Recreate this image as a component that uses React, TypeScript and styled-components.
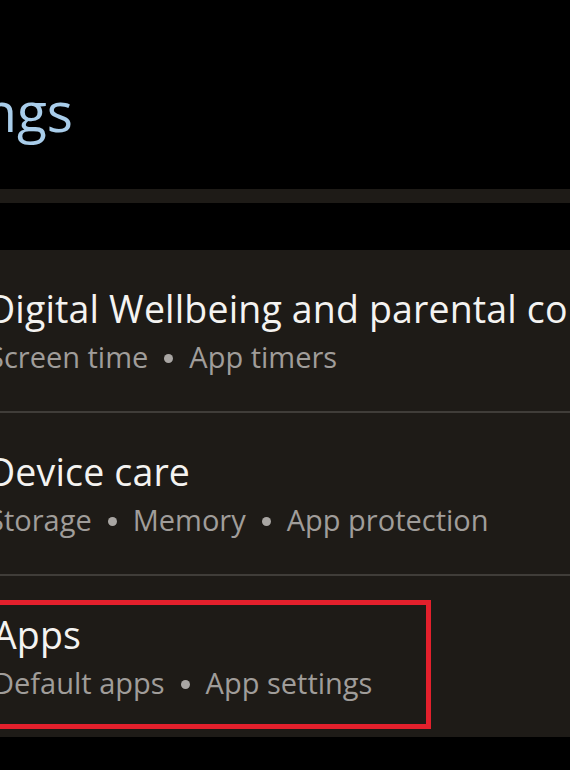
import React from "react";
import styled, { createGlobalStyle } from "styled-components";

const Global = createGlobalStyle`
  html, body { margin: 0; padding: 0; background: #000; }
  body { overflow: hidden; font-family: "Open Sans", "Noto Sans", sans-serif; }
`;

const Page = styled.div`
  width: 570px;
  height: 770px;
  overflow: hidden;
  background: #000;
  display: flex;
  flex-direction: column;
`;

const Header = styled.header`
  height: 189px;
  display: flex;
  align-items: flex-start;
  justify-content: flex-end;
  width: 300px;
  margin-left: -227px;
  box-sizing: border-box;
  padding-top: 79px;
  flex: none;
`;

const Title = styled.h1`
  margin: 0;
  font-size: 55px;
  line-height: 64px;
  font-weight: 400;
  color: #a9cdea;
  white-space: nowrap;
`;

const Strip = styled.div`
  height: 14px;
  background: #1e1b17;
  flex: none;
`;

const Spacer = styled.div`
  height: 47px;
  flex: none;
`;

const Card = styled.section`
  background: #1e1b17;
  display: flex;
  flex-direction: column;
  flex: none;
`;

const Row = styled.div<{ $pad?: string }>`
  height: 161px;
  box-sizing: border-box;
  padding: ${(p) => p.$pad ?? "37px 0 0 0"};
  margin-left: -12px;
  display: flex;
  flex-direction: column;
`;

const Divider = styled.div`
  height: 2px;
  background: #403d39;
  flex: none;
`;

const Highlight = styled.div`
  width: 451px;
  box-sizing: border-box;
  border: 5px solid #e3202c;
  padding: 8px 0 0 8px;
  margin-left: -8px;
  height: 129px;
`;

const ItemTitle = styled.div`
  font-size: 37.5px;
  line-height: 44px;
  letter-spacing: 0.15px;
  color: #f4f3f1;
  white-space: nowrap;
`;

const ItemSub = styled.div`
  margin-top: 8px;
  font-size: 29px;
  line-height: 36px;
  color: #a09d9a;
  white-space: nowrap;
  display: flex;
  align-items: center;
`;

const Dot = styled.span`
  display: inline-block;
  width: 9px;
  height: 9px;
  border-radius: 50%;
  background: #a9a6a3;
  margin: 2px 16px 0 16px;
`;

function Sub({ parts }: { parts: string[] }) {
  return (
    <ItemSub>
      {parts.map((p, i) => (
        <React.Fragment key={p}>
          {i > 0 && <Dot />}
          <span>{p}</span>
        </React.Fragment>
      ))}
    </ItemSub>
  );
}

export default function App() {
  return (
    <>
      <Global />
      <Page>
        <Header>
          <Title>Settings</Title>
        </Header>
        <Strip />
        <Spacer />
        <Card>
          <Row>
            <ItemTitle>Digital Wellbeing and parental controls</ItemTitle>
            <Sub parts={["Screen time", "App timers"]} />
          </Row>
          <Divider />
          <Row>
            <ItemTitle>Device care</ItemTitle>
            <Sub parts={["Storage", "Memory", "App protection"]} />
          </Row>
          <Divider />
          <Row $pad="24px 0 0 0">
            <Highlight>
              <ItemTitle>Apps</ItemTitle>
              <Sub parts={["Default apps", "App settings"]} />
            </Highlight>
          </Row>
        </Card>
      </Page>
    </>
  );
}
